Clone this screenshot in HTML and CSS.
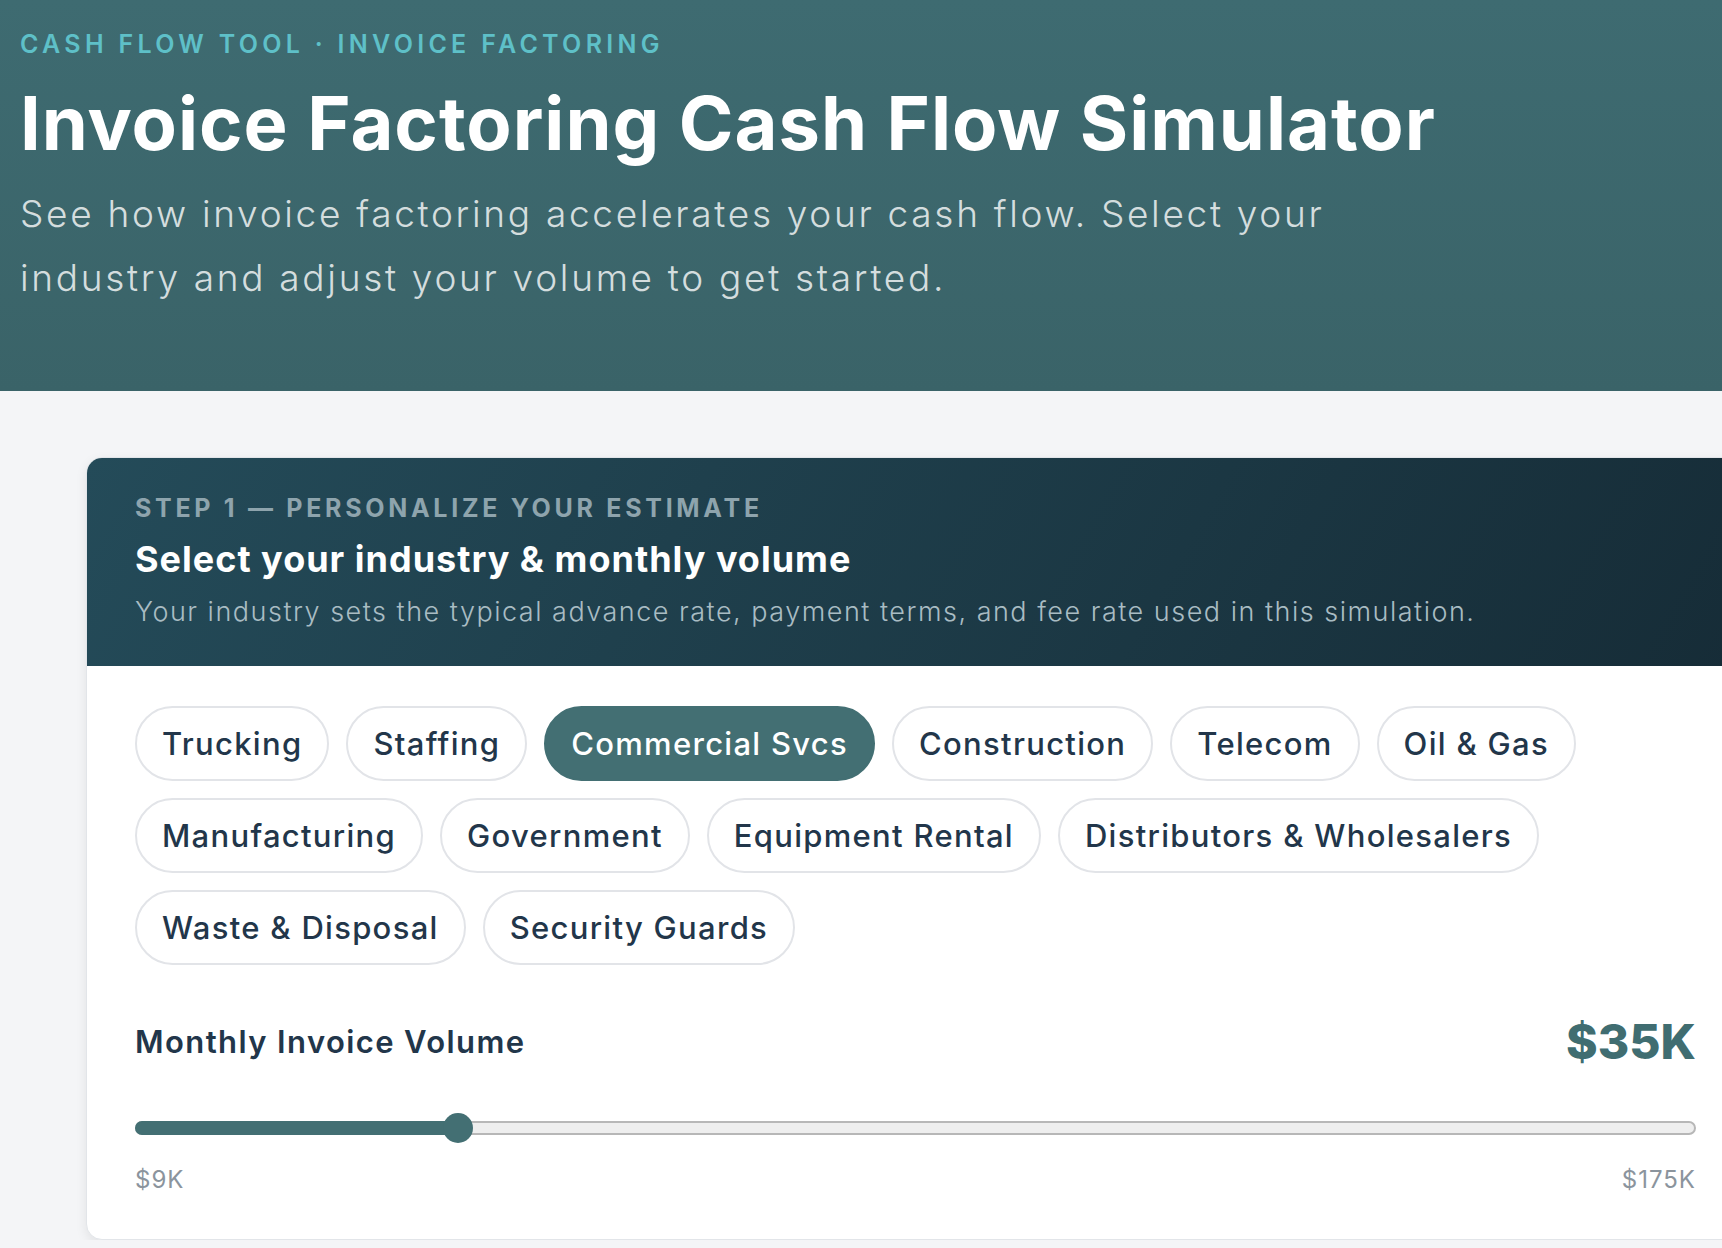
FILE: index.html
```html
<!DOCTYPE html>
<html lang="en" dir="ltr">

<head>
  <meta charset="utf-8">
  <title>Invoice Factoring Cash Flow Simulator</title>
  <link rel="stylesheet" href="styles.css">
</head>

<body>
  <header class="hero">
    <p class="eyebrow">Cash Flow Tool · Invoice Factoring</p>
    <h1>Invoice Factoring Cash Flow Simulator</h1>
    <p class="lede">See how invoice factoring accelerates your cash flow. Select your industry and adjust your volume to get started.</p>
  </header>

  <main class="page">
    <section class="card">
      <div class="card-head">
        <p class="step">Step 1 — Personalize your estimate</p>
        <h2>Select your industry &amp; monthly volume</h2>
        <p class="card-desc">Your industry sets the typical advance rate, payment terms, and fee rate used in this simulation.</p>
      </div>

      <div class="card-body">
        <div class="chips">
          <button type="button" class="chip">Trucking</button>
          <button type="button" class="chip">Staffing</button>
          <button type="button" class="chip active">Commercial Svcs</button>
          <button type="button" class="chip">Construction</button>
          <button type="button" class="chip">Telecom</button>
          <button type="button" class="chip">Oil &amp; Gas</button>
          <button type="button" class="chip">Manufacturing</button>
          <button type="button" class="chip">Government</button>
          <button type="button" class="chip">Equipment Rental</button>
          <button type="button" class="chip">Distributors &amp; Wholesalers</button>
          <button type="button" class="chip">Waste &amp; Disposal</button>
          <button type="button" class="chip">Security Guards</button>
        </div>

        <div class="volume-head">
          <h3>Monthly Invoice Volume</h3>
          <span class="amount">$35K</span>
        </div>

        <div class="slider">
          <div class="slider-fill" style="width: 20.6%"></div>
          <span class="slider-thumb" style="left: 20.6%"></span>
        </div>

        <div class="slider-labels">
          <span>$9K</span>
          <span>$175K</span>
        </div>
      </div>
    </section>
  </main>
</body>

</html>
```

FILE: styles.css
```css
html,
body {
  margin: 0;
  padding: 0;
}

body {
  background: #f4f5f7;
  font-family: Inter, "Noto Sans", sans-serif;
  color: #22364a;
  overflow-x: hidden;
}

.hero {
  box-sizing: border-box;
  height: 391px;
  padding: 24px 20px 0;
  background: linear-gradient(180deg, #3e6b71, #3a6368);
  color: #fff;
}

.eyebrow {
  margin: 0;
  font-size: 25px;
  line-height: 40px;
  font-weight: 600;
  letter-spacing: 4.3px;
  text-transform: uppercase;
  color: #5ec0c8;
}

.hero h1 {
  margin: 15px 0 0;
  font-size: 74px;
  line-height: 88px;
  font-weight: 700;
  letter-spacing: 1px;
}

.lede {
  max-width: 1400px;
  margin: 15px 0 0;
  font-size: 37px;
  line-height: 64px;
  font-weight: 300;
  letter-spacing: 2.7px;
  color: rgba(255, 255, 255, 0.8);
}

.page {
  padding: 66px 0 0 86px;
}

.card {
  box-sizing: border-box;
  width: 1659px;
  background: #fff;
  border: 1px solid #e2e5e9;
  border-radius: 16px;
  box-shadow: 0 4px 12px rgba(0, 0, 0, 0.08);
  overflow: hidden;
}

.card-head {
  box-sizing: border-box;
  height: 208px;
  padding: 35px 48px 0;
  background: linear-gradient(120deg, #244b59, #162c37);
}

.step {
  margin: 0;
  font-size: 25px;
  line-height: 30px;
  font-weight: 700;
  letter-spacing: 3.7px;
  text-transform: uppercase;
  color: #8ea4ad;
}

.card-head h2 {
  margin: 13px 0 0;
  font-size: 36px;
  line-height: 46px;
  font-weight: 700;
  letter-spacing: 1px;
  color: #fff;
}

.card-desc {
  margin: 10px 0 0;
  font-size: 27px;
  line-height: 40px;
  font-weight: 300;
  letter-spacing: 1.5px;
  color: #a9bcc3;
}

.card-body {
  padding: 40px 48px 44px;
}

.chips {
  display: flex;
  flex-wrap: wrap;
  gap: 17px;
}

.chip {
  height: 75px;
  padding: 0 25px;
  border: 2px solid #e2e4e8;
  border-radius: 38px;
  background: #fff;
  font-family: inherit;
  font-size: 31px;
  font-weight: 500;
  letter-spacing: 1.3px;
  color: #22364a;
  cursor: pointer;
}

.chip.active {
  background: #436f73;
  border-color: #436f73;
  color: #fff;
}

.volume-head {
  display: flex;
  justify-content: space-between;
  align-items: center;
  margin-top: 50px;
  height: 52px;
}

.volume-head h3 {
  margin: 0;
  font-size: 31px;
  font-weight: 600;
  letter-spacing: 1.4px;
}

.amount {
  font-size: 48px;
  font-weight: 800;
  color: #406d71;
}

.slider {
  position: relative;
  display: flex;
  box-sizing: border-box;
  height: 14px;
  margin-top: 54px;
  border: 2px solid #b7b7b7;
  border-radius: 7px;
  background: #eee;
}

.slider-fill {
  margin: -2px 0 -2px -2px;
  border-radius: 7px 0 0 7px;
  background: #436f73;
}

.slider-thumb {
  position: absolute;
  top: 50%;
  width: 30px;
  height: 30px;
  margin: -15px 0 0 -15px;
  border-radius: 50%;
  background: #436f73;
}

.slider-labels {
  display: flex;
  justify-content: space-between;
  margin-top: 30px;
  font-size: 24px;
  line-height: 30px;
  letter-spacing: 1px;
  color: #8b949d;
}
```
